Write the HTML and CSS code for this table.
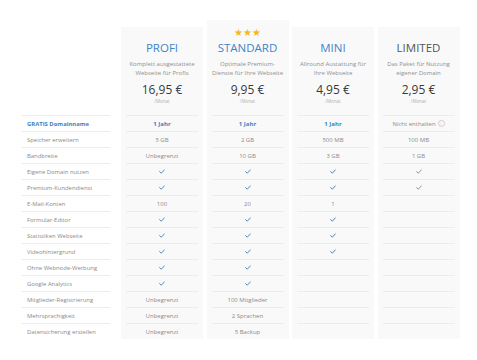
FILE: index.html
```html
<!DOCTYPE html>
<html lang="de">
<head>
<meta charset="utf-8">
<title>Preise</title>
<link rel="stylesheet" href="styles.css">
</head>
<body>
<div class="pricing">
  <div class="labels">
    <div class="row hl">GRATIS Domainname</div>
    <div class="row">Speicher erweitern</div>
    <div class="row">Bandbreite</div>
    <div class="row">Eigene Domain nutzen</div>
    <div class="row">Premium-Kundendienst</div>
    <div class="row">E-Mail-Konten</div>
    <div class="row">Formular-Editor</div>
    <div class="row">Statistiken Webseite</div>
    <div class="row">Videohintergrund</div>
    <div class="row">Ohne Webnode-Werbung</div>
    <div class="row">Google Analytics</div>
    <div class="row">Mitglieder-Registrierung</div>
    <div class="row">Mehrsprachigkeit</div>
    <div class="row">Datensicherung erstellen</div>
  </div>

  <div class="plan">
    <div class="head">
      <div class="title">PROFI</div>
      <div class="desc">Komplett ausgestattete<br>Webseite für Profis</div>
      <div class="price">16,95 €</div>
      <div class="per">/Monat</div>
    </div>
    <div class="row hl">1 Jahr</div>
    <div class="row">5 GB</div>
    <div class="row">Unbegrenzt</div>
    <div class="row"><svg class="chk" viewBox="0 0 10 8"><path d="M1 4.2 3.8 6.8 9 1.2"/></svg></div>
    <div class="row"><svg class="chk" viewBox="0 0 10 8"><path d="M1 4.2 3.8 6.8 9 1.2"/></svg></div>
    <div class="row">100</div>
    <div class="row"><svg class="chk" viewBox="0 0 10 8"><path d="M1 4.2 3.8 6.8 9 1.2"/></svg></div>
    <div class="row"><svg class="chk" viewBox="0 0 10 8"><path d="M1 4.2 3.8 6.8 9 1.2"/></svg></div>
    <div class="row"><svg class="chk" viewBox="0 0 10 8"><path d="M1 4.2 3.8 6.8 9 1.2"/></svg></div>
    <div class="row"><svg class="chk" viewBox="0 0 10 8"><path d="M1 4.2 3.8 6.8 9 1.2"/></svg></div>
    <div class="row"><svg class="chk" viewBox="0 0 10 8"><path d="M1 4.2 3.8 6.8 9 1.2"/></svg></div>
    <div class="row">Unbegrenzt</div>
    <div class="row">Unbegrenzt</div>
    <div class="row">Unbegrenzt</div>
  </div>

  <div class="plan featured">
    <div class="head">
      <div class="stars"><span>★</span><span>★</span><span>★</span></div>
      <div class="title">STANDARD</div>
      <div class="desc">Optimale Premium-<br>Dienste für Ihre Webseite</div>
      <div class="price">9,95 €</div>
      <div class="per">/Monat</div>
    </div>
    <div class="row hl">1 Jahr</div>
    <div class="row">2 GB</div>
    <div class="row">10 GB</div>
    <div class="row"><svg class="chk" viewBox="0 0 10 8"><path d="M1 4.2 3.8 6.8 9 1.2"/></svg></div>
    <div class="row"><svg class="chk" viewBox="0 0 10 8"><path d="M1 4.2 3.8 6.8 9 1.2"/></svg></div>
    <div class="row">20</div>
    <div class="row"><svg class="chk" viewBox="0 0 10 8"><path d="M1 4.2 3.8 6.8 9 1.2"/></svg></div>
    <div class="row"><svg class="chk" viewBox="0 0 10 8"><path d="M1 4.2 3.8 6.8 9 1.2"/></svg></div>
    <div class="row"><svg class="chk" viewBox="0 0 10 8"><path d="M1 4.2 3.8 6.8 9 1.2"/></svg></div>
    <div class="row"><svg class="chk" viewBox="0 0 10 8"><path d="M1 4.2 3.8 6.8 9 1.2"/></svg></div>
    <div class="row"><svg class="chk" viewBox="0 0 10 8"><path d="M1 4.2 3.8 6.8 9 1.2"/></svg></div>
    <div class="row">100 Mitglieder</div>
    <div class="row">2 Sprachen</div>
    <div class="row">5 Backup</div>
  </div>

  <div class="plan">
    <div class="head">
      <div class="title">MINI</div>
      <div class="desc">Allround Austattung für<br>Ihre Webseite</div>
      <div class="price">4,95 €</div>
      <div class="per">/Monat</div>
    </div>
    <div class="row hl">1 Jahr</div>
    <div class="row">500 MB</div>
    <div class="row">3 GB</div>
    <div class="row"><svg class="chk" viewBox="0 0 10 8"><path d="M1 4.2 3.8 6.8 9 1.2"/></svg></div>
    <div class="row"><svg class="chk" viewBox="0 0 10 8"><path d="M1 4.2 3.8 6.8 9 1.2"/></svg></div>
    <div class="row">1</div>
    <div class="row"><svg class="chk" viewBox="0 0 10 8"><path d="M1 4.2 3.8 6.8 9 1.2"/></svg></div>
    <div class="row"><svg class="chk" viewBox="0 0 10 8"><path d="M1 4.2 3.8 6.8 9 1.2"/></svg></div>
    <div class="row"><svg class="chk" viewBox="0 0 10 8"><path d="M1 4.2 3.8 6.8 9 1.2"/></svg></div>
    <div class="row"></div>
    <div class="row"></div>
    <div class="row"></div>
    <div class="row"></div>
    <div class="row"></div>
  </div>

  <div class="plan limited">
    <div class="head">
      <div class="title">LIMITED</div>
      <div class="desc">Das Paket für Nutzung<br>eigener Domain</div>
      <div class="price">2,95 €</div>
      <div class="per">/Monat</div>
    </div>
    <div class="row">Nicht enthalten <span class="info">i</span></div>
    <div class="row">100 MB</div>
    <div class="row">1 GB</div>
    <div class="row"><svg class="chk" viewBox="0 0 10 8"><path d="M1 4.2 3.8 6.8 9 1.2"/></svg></div>
    <div class="row"><svg class="chk" viewBox="0 0 10 8"><path d="M1 4.2 3.8 6.8 9 1.2"/></svg></div>
    <div class="row"></div>
    <div class="row"></div>
    <div class="row"></div>
    <div class="row"></div>
    <div class="row"></div>
    <div class="row"></div>
    <div class="row"></div>
    <div class="row"></div>
    <div class="row"></div>
  </div>
</div>
</body>
</html>
```
FILE: styles.css
```css
html, body {
  margin: 0;
  padding: 0;
  background: #fff;
}
body {
  font-family: "Open Sans", "Noto Sans", sans-serif;
  color: #888;
}
.pricing {
  display: flex;
  align-items: flex-end;
  padding: 20px 0 0 22px;
  height: 319px;
}
.labels {
  width: 88px;
  margin-right: 11px;
}
.labels .row {
  justify-content: flex-start;
  padding-left: 5px;
  font-size: 5.9px;
}
.plan {
  width: 82px;
  margin-right: 3.5px;
  background: #f9f9f9;
}
.plan .row {
  margin: 0 5px;
}
.head {
  height: 88px;
  box-sizing: border-box;
  padding-top: 11px;
  text-align: center;
}
.featured .head {
  height: 95px;
  padding-top: 6px;
}
.stars {
  height: 12px;
  line-height: 12px;
  font-size: 10px;
  color: #f2b81c;
  letter-spacing: 0.2px;
}
.title {
  font-size: 11.5px;
  line-height: 20px;
  font-weight: 400;
  color: #3f85c6;
}
.limited .title {
  color: #555;
}
.desc {
  font-size: 6px;
  line-height: 9px;
  color: #909090;
  margin-top: 2px;
}
.price {
  font-size: 12px;
  line-height: 16px;
  color: #3a3a3a;
  margin-top: 4px;
}
.per {
  font-size: 4.5px;
  line-height: 7px;
  color: #b0b0b0;
}
.row {
  height: 16px;
  border-top: 1px solid #ececec;
  box-sizing: border-box;
  display: flex;
  align-items: center;
  justify-content: center;
  font-size: 6px;
  color: #8a8a8a;
  white-space: nowrap;
}
.row.hl {
  color: #3f7fc0;
  font-weight: 700;
}
.chk {
  width: 6px;
  height: 5px;
  fill: none;
  stroke: #4f78a6;
  stroke-width: 1.5;
  stroke-linecap: round;
  stroke-linejoin: round;
}
.limited .chk {
  stroke: #8a8a8a;
}
.info {
  display: inline-flex;
  align-items: center;
  justify-content: center;
  width: 5px;
  height: 5px;
  border: 0.7px solid #ccc;
  border-radius: 50%;
  font-size: 4px;
  color: #ccc;
  margin-left: 2px;
}
```
